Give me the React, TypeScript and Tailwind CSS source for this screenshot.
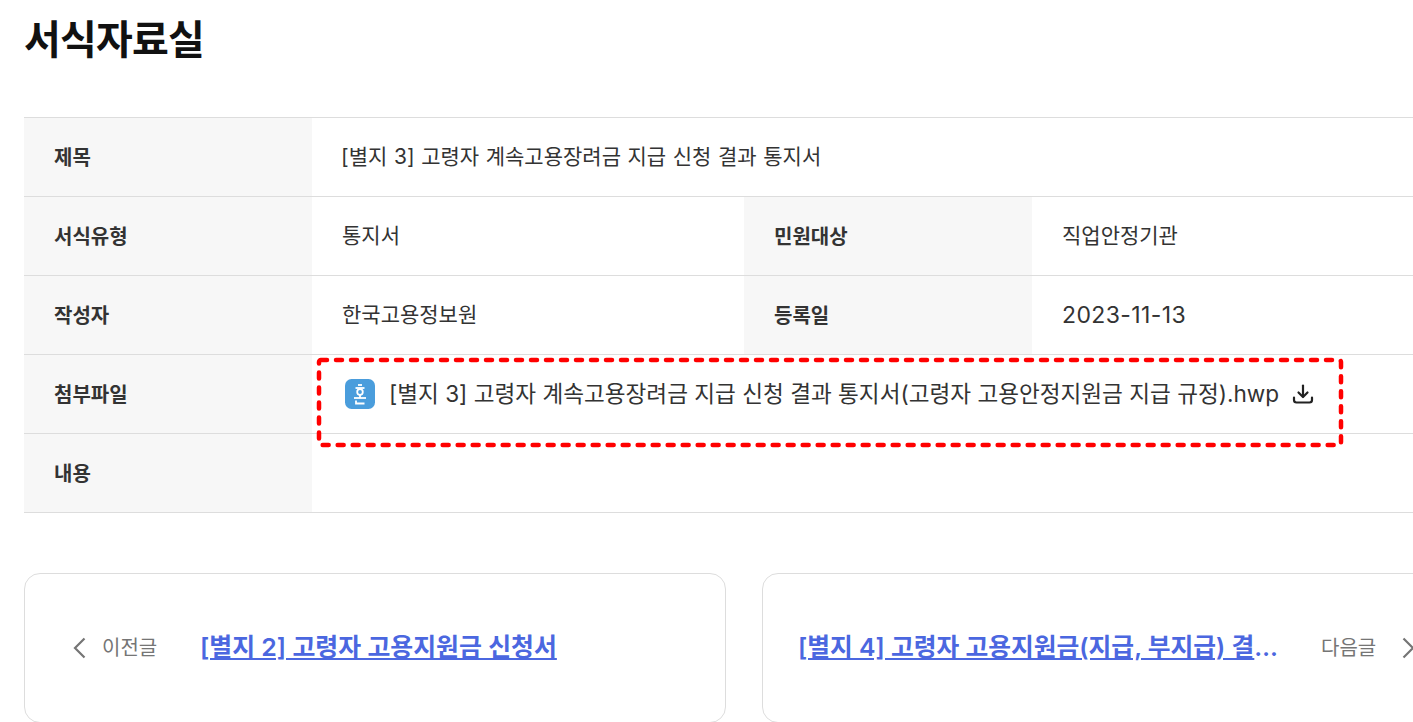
import React from "react";

const font = { fontFamily: 'Inter, "Noto Sans CJK KR", sans-serif' };

function Label({ children }: { children: React.ReactNode }) {
  return (
    <div className="w-[288px] shrink-0 bg-[#f7f7f7] pl-[30px] pt-[2px] flex items-center text-[20px] font-bold text-[#333333]">
      {children}
    </div>
  );
}

function Value({ children, wide }: { children?: React.ReactNode; wide?: boolean }) {
  return (
    <div className={wide ? "flex-1 pl-[30px] flex items-center text-[21px] text-[#333333]" : "w-[432px] shrink-0 pl-[30px] flex items-center text-[21px] text-[#333333]"}>
      {children}
    </div>
  );
}

function Row({ children }: { children: React.ReactNode }) {
  return <div className="flex h-[79px] border-b border-[#dddddd]">{children}</div>;
}

function Chevron({ dir }: { dir: "left" | "right" }) {
  return (
    <svg width="14" height="22" viewBox="0 0 14 22" fill="none" stroke="#757575" strokeWidth="2.2" className="shrink-0">
      {dir === "left" ? <path d="M12.5 1.5 L3 11 L12.5 20.5" /> : <path d="M1.5 1.5 L11 11 L1.5 20.5" />}
    </svg>
  );
}

export default function App() {
  return (
    <div className="relative w-[1413px] h-[722px] overflow-hidden bg-white" style={font}>
      <div className="w-[1440px] ml-6">
        <h1 className="h-[117px] pt-[11px] text-[40px] leading-[58px] font-bold text-[#111111] tracking-[-0.8px]">서식자료실</h1>
        <div className="border-t border-[#dddddd]">
          <Row>
            <Label>제목</Label>
            <Value wide>
              <span className="[word-spacing:0.7px] -ml-px">[별지 3] 고령자 계속고용장려금 지급 신청 결과 통지서</span>
            </Value>
          </Row>
          <Row>
            <Label>서식유형</Label>
            <Value>통지서</Value>
            <Label>민원대상</Label>
            <Value>직업안정기관</Value>
          </Row>
          <Row>
            <Label>작성자</Label>
            <Value>한국고용정보원</Value>
            <Label>등록일</Label>
            <Value>
              <span className="text-[23px] tracking-[0.4px]">2023-11-13</span>
            </Value>
          </Row>
          <Row>
            <Label>첨부파일</Label>
            <Value wide>
              <svg width="30" height="30" viewBox="0 0 30 30" fill="none" stroke="#ffffff" strokeWidth="1.8" className="ml-[3px] shrink-0">
                <rect x="0" y="0" width="30" height="30" rx="6.5" fill="#4a9ddc" stroke="none" />
                <path d="M13 6 H17" />
                <path d="M10.5 9 H19.5" />
                <circle cx="15" cy="13" r="2.8" />
                <path d="M15 16 V19" />
                <path d="M9 19 H21" />
                <path d="M11 21.5 V24.5 H19.5" />
              </svg>
              <span className="ml-[14px] text-[22.6px]">[별지 3] 고령자 계속고용장려금 지급 신청 결과 통지서(고령자 고용안정지원금 지급 규정).hwp</span>
              <svg width="24" height="24" viewBox="0 0 24 24" fill="none" stroke="#222222" strokeWidth="2.2" strokeLinecap="round" strokeLinejoin="round" className="ml-[12px] shrink-0">
                <path d="M12 3.5 V14.5" />
                <path d="M7.5 10.5 L12 15 L16.5 10.5" />
                <path d="M3 15.5 V18 Q3 20.5 5.5 20.5 H18.5 Q21 20.5 21 18 V15.5" />
              </svg>
            </Value>
          </Row>
          <Row>
            <Label>내용</Label>
            <Value wide />
          </Row>
        </div>
        <div className="mt-[60px] flex gap-9">
          <div className="w-[702px] h-[150px] shrink-0 rounded-[16px] border border-[#dddddd] flex items-center pl-[47px]">
            <Chevron dir="left" />
            <span className="ml-[16px] w-[99px] shrink-0 text-[20px] text-[#757575]">이전글</span>
            <a className="-ml-px text-[24.9px] font-semibold text-[#4b67e0] underline">[별지 2] 고령자 고용지원금 신청서</a>
          </div>
          <div className="w-[702px] h-[150px] shrink-0 rounded-[16px] border border-[#dddddd] flex items-center pl-[35px]">
            <a className="w-[481px] shrink-0 truncate text-[24.75px] font-semibold text-[#4b67e0] underline">[별지 4] 고령자 고용지원금(지급, 부지급) 결정 통지서</a>
            <span className="ml-[42px] text-[20px] text-[#757575]">다음글</span>
            <span className="ml-[26px]"><Chevron dir="right" /></span>
          </div>
        </div>
      </div>
      <svg width="1030" height="93" viewBox="0 0 1030 93" fill="none" className="absolute left-[315px] top-[356px]">
        <rect x="4" y="4" width="1022" height="85" rx="2" stroke="#ff0000" strokeWidth="4.5" strokeDasharray="6 9" strokeLinecap="round" />
      </svg>
    </div>
  );
}
